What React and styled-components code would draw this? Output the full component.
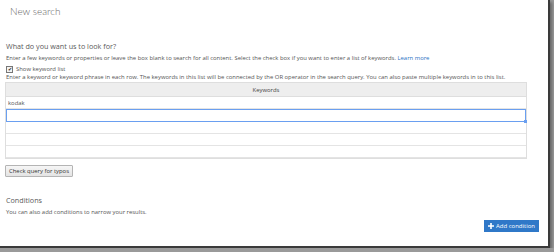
import React from "react";
import styled, { createGlobalStyle } from "styled-components";

const Global = createGlobalStyle`
  html, body { margin: 0; padding: 0; background: #9a9a9a; }
  body { font-family: "Open Sans", "Noto Sans", sans-serif; color: #555; }
`;

const Frame = styled.div`
  width: 543px;
  height: 246px;
  background: #fff;
  border-right: 2px solid #3a3a3a;
  border-bottom: 2px solid #3a3a3a;
  box-shadow: 2px 2px 3px rgba(0,0,0,0.35);
  display: flex;
  flex-direction: column;
  padding: 0 0 0 5px;
  box-sizing: content-box;
`;

const Title = styled.h1`
  margin: 5px 0 0 5px;
  font-family: "Lato", "Open Sans", sans-serif;
  font-size: 10px;
  line-height: 13px;
  font-weight: 300;
  color: #6a6a6a;
`;

const Heading = styled.h2`
  margin: ${p => p.$top}px 0 0 1px;
  font-size: 7.2px;
  line-height: 10px;
  font-weight: 400;
  color: #5a5a5a;
`;

const Small = styled.p`
  margin: ${p => p.$top || 0}px 0 0 1px;
  font-size: 5.9px;
  line-height: 8px;
  color: #555;
  white-space: nowrap;
`;

const Link = styled.a`
  color: #2a72c4;
  text-decoration: none;
`;

const CheckRow = styled.label`
  display: flex;
  align-items: center;
  gap: 3px;
  margin: 3px 0 0 1px;
  font-size: 5.9px;
  line-height: 8px;
  color: #555;
`;

const Box = styled.span`
  width: 5px;
  height: 5px;
  border: 1px solid #777;
  background: #f4f4f4;
  display: flex;
  align-items: center;
  justify-content: center;
  font-size: 5px;
  line-height: 5px;
  color: #222;
`;

const Table = styled.div`
  width: 520px;
  margin-top: 1px;
  border: 1px solid #dedede;
  display: flex;
  flex-direction: column;
`;

const Header = styled.div`
  height: 13px;
  background: #eeeeee;
  border-bottom: 1px solid #dedede;
  display: flex;
  align-items: center;
  justify-content: center;
  font-size: 5.9px;
  color: #444;
`;

const Row = styled.div`
  height: 11px;
  border: ${p => (p.$active ? "1px solid #6a9ff0" : "none")};
  border-bottom: ${p => (p.$active ? "1px solid #6a9ff0" : "1px solid #e4e4e4")};
  display: flex;
  align-items: center;
  padding-left: 2px;
  font-size: 5.9px;
  color: #555;
  position: relative;
`;

const Handle = styled.span`
  position: absolute;
  right: -2px;
  bottom: -2px;
  width: 3px;
  height: 3px;
  background: #6a9ff0;
`;

const Button = styled.button`
  align-self: flex-start;
  margin-top: 6px;
  height: 12px;
  padding: 0 3px;
  border: 1px solid #b4b4b4;
  border-radius: 1px;
  background: linear-gradient(#f6f6f6, #e4e4e4);
  font-family: "Open Sans", sans-serif;
  font-size: 5.9px;
  color: #333;
  line-height: 10px;
`;

const Footer = styled.div`
  display: flex;
  justify-content: flex-end;
  padding-right: 9px;
  margin-top: 4px;
`;

const AddButton = styled.button`
  height: 12px;
  padding: 0 4px;
  border: none;
  background: #2f78c8;
  color: #fff;
  font-family: "Open Sans", sans-serif;
  font-size: 6px;
  display: flex;
  align-items: center;
  gap: 2px;
`;

export default function App() {
  return (
    <>
      <Global />
      <Frame>
        <Title>New search</Title>
        <Heading $top={23}>What do you want us to look for?</Heading>
        <Small $top={3}>
          Enter a few keywords or properties or leave the box blank to search for all content. Select the check box if you want to enter a list of keywords.{" "}
          <Link href="#">Learn more</Link>
        </Small>
        <CheckRow>
          <Box>✔</Box>
          Show keyword list
        </CheckRow>
        <Small>
          Enter a keyword or keyword phrase in each row. The keywords in this list will be connected by the OR operator in the search query. You can also paste multiple keywords in to this list.
        </Small>
        <Table>
          <Header>Keywords</Header>
          <Row>kodak</Row>
          <Row $active>
            <Handle />
          </Row>
          <Row />
          <Row />
          <Row />
        </Table>
        <Button>Check query for typos</Button>
        <Heading $top={18}>Conditions</Heading>
        <Small $top={3}>You can also add conditions to narrow your results.</Small>
        <Footer>
          <AddButton>
            <svg width="6" height="6" viewBox="0 0 6 6">
              <path d="M2.2 0h1.6v2.2H6v1.6H3.8V6H2.2V3.8H0V2.2h2.2z" fill="#fff" />
            </svg>
            Add condition
          </AddButton>
        </Footer>
      </Frame>
    </>
  );
}
